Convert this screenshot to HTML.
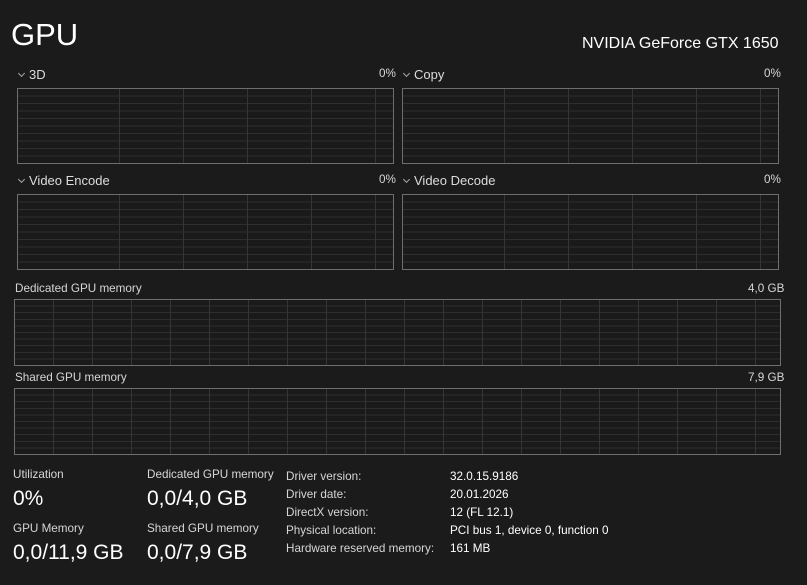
<!DOCTYPE html><html><head><style>
body{margin:0;width:807px;height:585px;background:#1b1b1b;color:#fff;font-family:"Liberation Sans",sans-serif;position:relative;overflow:hidden}
.a{position:absolute;white-space:nowrap}
.g{position:absolute;border:1px solid #6e6e6e;box-sizing:border-box;
background:repeating-linear-gradient(to right,transparent 0,transparent 63px,#353535 63px,#353535 64px),repeating-linear-gradient(to bottom,transparent 0,transparent 6.5px,#2e2e2e 6.5px,#2e2e2e 7.5px),#1a1a1a;background-position:38px 0,0 0}
.m{background:repeating-linear-gradient(to right,transparent 0,transparent 38px,#353535 38px,#353535 39px),repeating-linear-gradient(to bottom,transparent 0,transparent 5.6px,#2e2e2e 5.6px,#2e2e2e 6.6px),#1a1a1a}
.s{font-size:13px;color:#dcdcdc}
.l{font-size:11.7px;color:#d6d6d6}
.big{font-size:21px;color:#fff}
.c{display:inline-block;width:4px;height:4px;border-right:1px solid #aaa;border-bottom:1px solid #aaa;transform:rotate(45deg);margin:0 5px 3px 2px}
</style></head><body>
<div class="a" style="left:11px;top:17px;font-size:31px">GPU</div>
<div class="a" style="left:582px;top:35px;font-size:16px">NVIDIA GeForce GTX 1650</div>
<div class="a s" style="left:17px;top:67px"><span class="c"></span>3D</div>
<div class="a l" style="left:379px;top:67px">0%</div>
<div class="a s" style="left:402px;top:67px"><span class="c"></span>Copy</div>
<div class="a l" style="left:764px;top:67px">0%</div>
<div class="g" style="left:17px;top:88px;width:377px;height:76px"></div>
<div class="g" style="left:402px;top:88px;width:377px;height:76px"></div>
<div class="a s" style="left:17px;top:173px"><span class="c"></span>Video Encode</div>
<div class="a l" style="left:379px;top:173px">0%</div>
<div class="a s" style="left:402px;top:173px"><span class="c"></span>Video Decode</div>
<div class="a l" style="left:764px;top:173px">0%</div>
<div class="g" style="left:17px;top:194px;width:377px;height:76px"></div>
<div class="g" style="left:402px;top:194px;width:377px;height:76px"></div>
<div class="a l" style="left:15px;top:282px">Dedicated GPU memory</div>
<div class="a l" style="left:748px;top:282px">4,0 GB</div>
<div class="g m" style="left:14px;top:299px;width:767px;height:67px"></div>
<div class="a l" style="left:15px;top:371px">Shared GPU memory</div>
<div class="a l" style="left:748px;top:371px">7,9 GB</div>
<div class="g m" style="left:14px;top:388px;width:767px;height:67px"></div>
<div class="a l" style="left:13px;top:468px">Utilization</div>
<div class="a big" style="left:13px;top:487px">0%</div>
<div class="a l" style="left:13px;top:522px">GPU Memory</div>
<div class="a big" style="left:13px;top:541px">0,0/11,9 GB</div>
<div class="a l" style="left:147px;top:468px">Dedicated GPU memory</div>
<div class="a big" style="left:147px;top:487px">0,0/4,0 GB</div>
<div class="a l" style="left:147px;top:522px">Shared GPU memory</div>
<div class="a big" style="left:147px;top:541px">0,0/7,9 GB</div>
<div class="a l" style="left:286px;top:468px;line-height:18px">Driver version:<br>Driver date:<br>DirectX version:<br>Physical location:<br>Hardware reserved memory:</div>
<div class="a l" style="left:450px;top:468px;line-height:18px;color:#fff">32.0.15.9186<br>20.01.2026<br>12 (FL 12.1)<br>PCI bus 1, device 0, function 0<br>161 MB</div>
</body></html>
